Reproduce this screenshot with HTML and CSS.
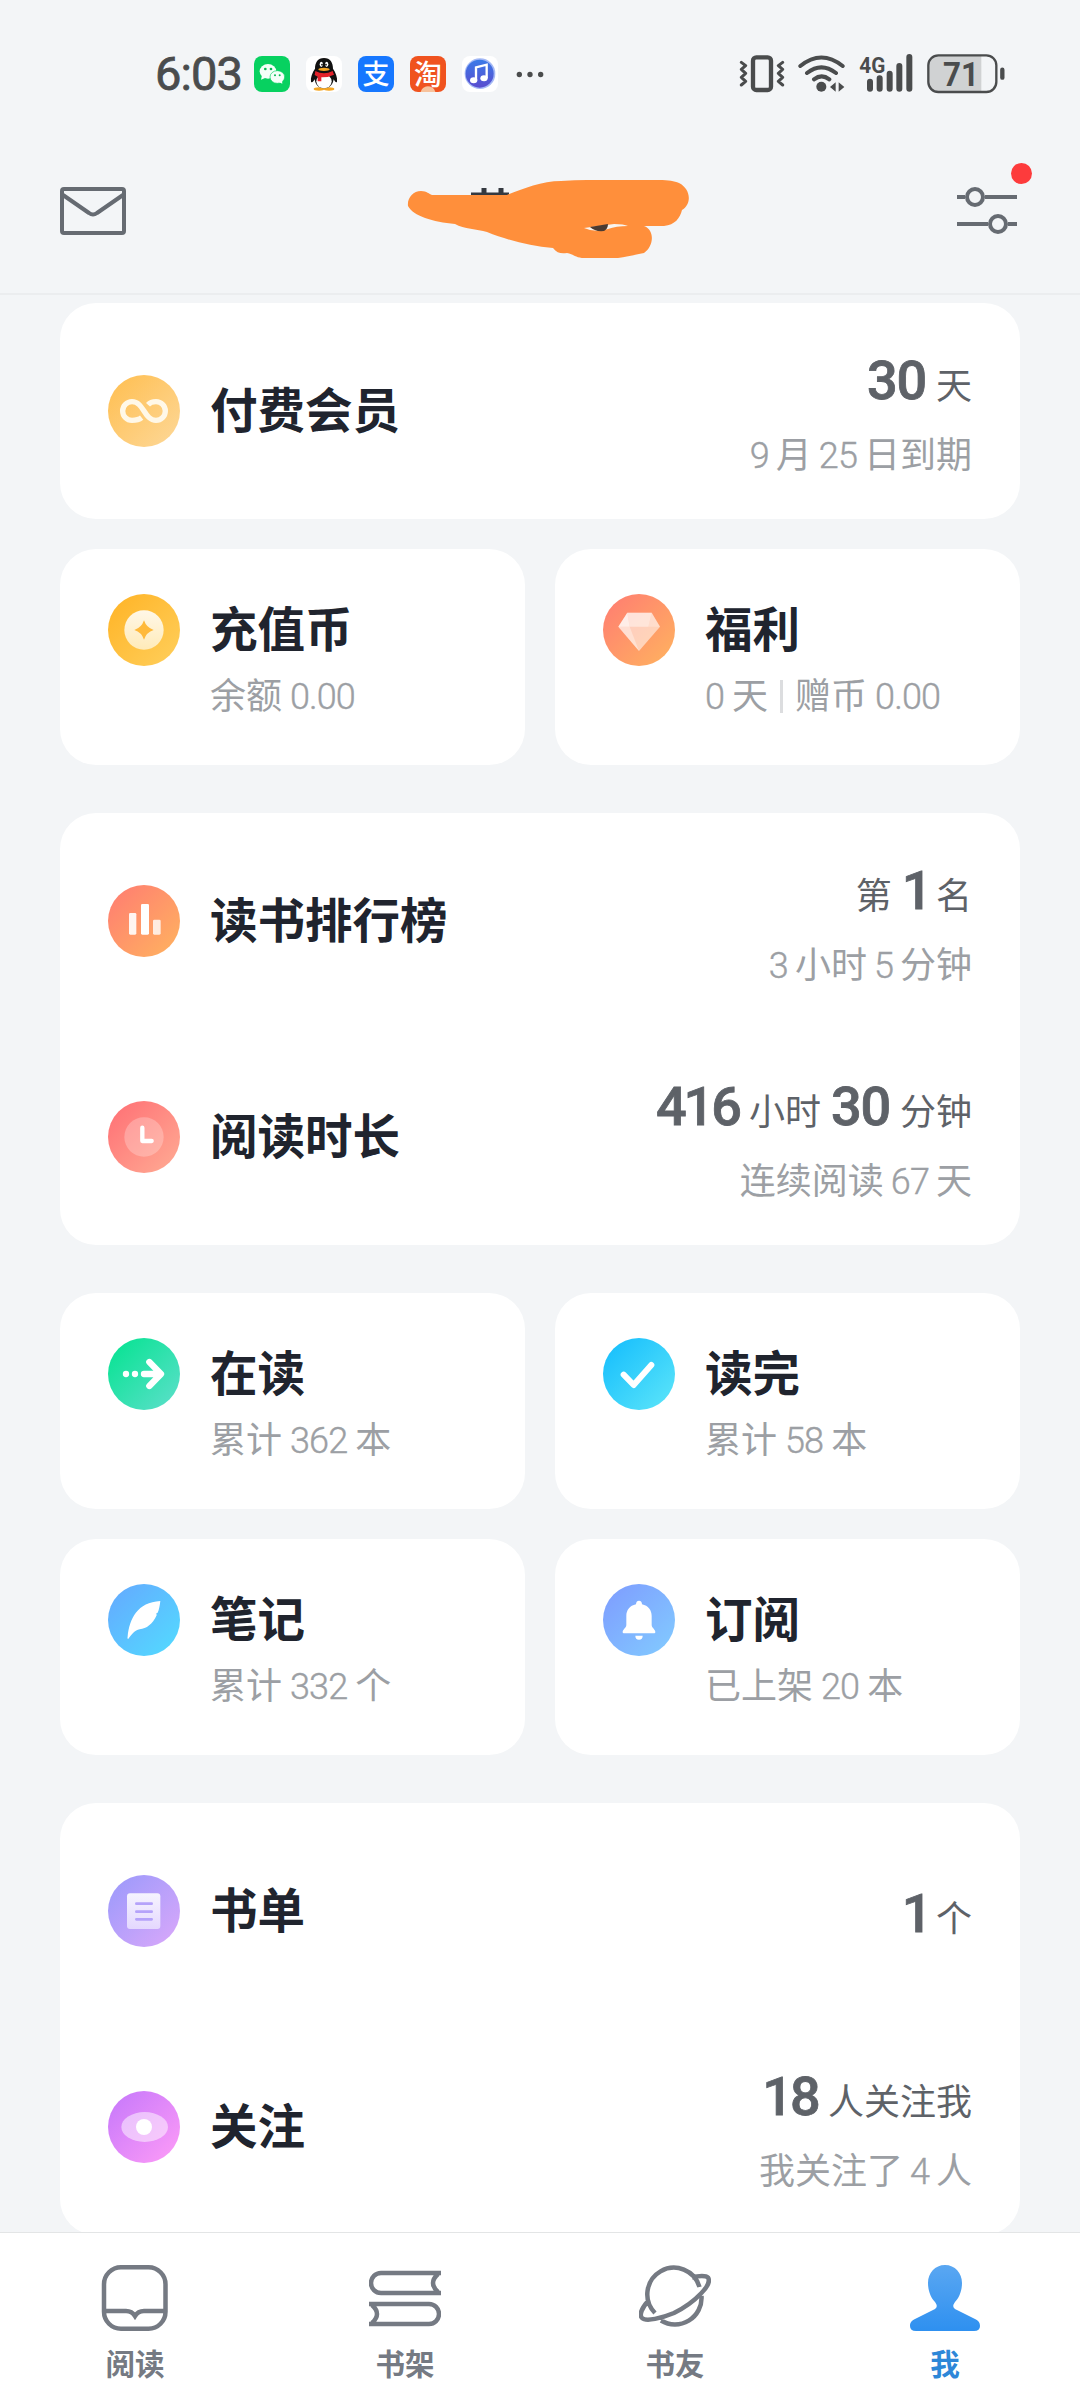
FILE: index.html
```html
<!DOCTYPE html>
<html lang="zh-CN">
<head>
<meta charset="utf-8">
<title>我</title>
<link rel="stylesheet" href="styles.css">
</head>
<body>
<div class="screen">
  <div class="status">
    <span class="time">6:03</span>
    <div class="apps">
      <svg viewBox="0 0 108 108"><rect width="108" height="108" rx="24" fill="#07d160"/><ellipse cx="42" cy="46" rx="25" ry="22" fill="#f4fff8"/><path d="M24 58l-3 13 14-6z" fill="#f4fff8"/><ellipse cx="70" cy="63" rx="22" ry="19" fill="#f4fff8" stroke="#07d160" stroke-width="2"/><path d="M74 78l11 5-1-9z" fill="#f4fff8"/><g fill="#07b953"><circle cx="34" cy="39" r="4"/><circle cx="51" cy="39" r="4"/><circle cx="63" cy="58" r="3"/><circle cx="77" cy="58" r="3"/></g></svg>
      <svg viewBox="0 0 108 108"><rect width="108" height="108" rx="24" fill="#fff"/><ellipse cx="39" cy="99" rx="16" ry="5" fill="#f5a623"/><ellipse cx="69" cy="99" rx="16" ry="5" fill="#f5a623"/><path d="M54 6c-19 0-27 14-27 32-8 12-14 26-12 39 3 5 8-1 11-7 2 14 10 27 28 27s27-13 29-27c3 6 8 12 10 7 2-13-4-27-12-39C81 20 73 6 54 6z" fill="#111"/><ellipse cx="54" cy="76" rx="23" ry="21" fill="#fff"/><path d="M28 45q26 14 52 0l4 11q-19 9-38 8v12H35V62l-9-5z" fill="#e3222b"/><ellipse cx="46" cy="25" rx="5" ry="8" fill="#fff"/><ellipse cx="62" cy="25" rx="5" ry="8" fill="#fff"/><circle cx="48" cy="26" r="2.5"/><circle cx="60" cy="26" r="2.5"/><ellipse cx="54" cy="40" rx="17" ry="5" fill="#f5a623"/></svg>
      <span class="app alipay">支</span>
      <span class="app taobao">淘</span>
      <svg viewBox="0 0 108 108"><defs><linearGradient id="mu" x2="0" y2="1"><stop stop-color="#3b7be8"/><stop offset="1" stop-color="#5a4ccf"/></linearGradient></defs><rect width="108" height="108" rx="24" fill="#fff"/><circle cx="54" cy="53" r="46" fill="#a5b9f5"/><circle cx="53" cy="53" r="42" fill="url(#mu)"/><path d="M42 72V34l32-8v40" fill="none" stroke="#fff" stroke-width="7"/><ellipse cx="35" cy="73" rx="11" ry="9" fill="#fff"/><ellipse cx="66" cy="67" rx="11" ry="9" fill="#fff"/></svg>
    </div>
    <svg class="more" viewBox="0 0 84 20" fill="#4a4c4d"><circle cx="10" cy="10" r="8"/><circle cx="42" cy="10" r="8"/><circle cx="74" cy="10" r="8"/></svg>
    <svg class="system" viewBox="0 0 810 120" fill="none" stroke="#4a4c4d">
      <rect x="42" y="10" width="54" height="98" rx="10" stroke-width="13"/>
      <path d="M7 25l13 10-13 11 13 12-13 12 13 12-13 11M131 25l-13 10 13 11-13 12 13 12-13 12 13 11" stroke-width="9" stroke-linejoin="round" stroke-linecap="round"/>
      <path d="M184 36q63-51 127 0M204 57q43-34 87 0M225 76q23-18 46 0" stroke-width="12" stroke-linecap="round"/>
      <g fill="#4a4c4d" stroke="none"><circle cx="247" cy="98" r="15"/><path d="M273 99l17-14v28zM316 99l-17-14v28z"/></g>
      <path d="M393 83v21M422 73v31M452 59v45M481 36v68M511 9v95" stroke-width="18" stroke-linecap="round"/>
      <text class="net" x="361" y="57" textLength="78" lengthAdjust="spacingAndGlyphs">4G</text>
      <path d="M596 6h131v106H596q-26 0-26-28V34q0-28 26-28z" fill="#d0d2d3" stroke="none"/>
      <rect x="568" y="4" width="204" height="110" rx="30" stroke-width="7"/>
      <path d="M790 47v24" stroke-width="13" stroke-linecap="round"/>
      <text class="level" x="612" y="95" textLength="108" lengthAdjust="spacingAndGlyphs">71</text>
    </svg>
  </div>

  <header class="topbar">
    <svg class="mail" viewBox="0 0 66 48" fill="none" stroke="#666b72" stroke-width="4" stroke-linejoin="round"><rect x="2" y="2" width="62" height="44" rx="2"/><path d="M3 8l26 18q4 3 8 0L63 8"/></svg>
    <svg class="scribble" viewBox="0 0 284 82"><path d="M65 16h38M78 9v7M95 9v7" stroke="#343940" stroke-width="5"/><path d="M2 27C1 19 7 12 15 12c6 0 8 3 11 4h75C116 10 136 2 155 2q14-1 26-1h72c10 0 15 1 20 3 12 6 13 21 3 27-2 8-7 15-18 16l-20 0c11 4 10 20 0 27-10 2-18 4-26 5h-34c-8 0-11-4-17-5-6 1-10 0-14-5-23-2-46-8-66-16-10-3-23-3-32-8C27 43 7 37 2 27z" fill="#ff8f3b"/><path d="M178 49q15-2 30-4 10 0 14 2-12 0-20 3-13 4-24-1z" fill="#f8f4ef"/><path d="M184 48l18-3q0 5-4 7-9 1-14-4z" fill="#4a3b32"/></svg>
    <div class="settings">
      <svg viewBox="0 0 60 48" fill="none" stroke="#666b72" stroke-width="4"><path d="M0 10h8M28 10h32M0 37h31M51 37h9"/><circle cx="18" cy="10" r="8"/><circle cx="41" cy="37" r="8"/></svg>
      <i class="dot"></i>
    </div>
  </header>

  <main class="content">
    <section class="card">
      <div class="row">
        <svg class="ico" viewBox="0 0 216 216"><defs><linearGradient id="g1" x2="1" y2="1"><stop stop-color="#ffbe4f"/><stop offset="1" stop-color="#fdd899"/></linearGradient></defs><circle cx="108" cy="108" r="108" fill="url(#g1)"/><path d="M101 128Q91 136 72 136a28 28 0 0 1 0-56c36 0 36 56 72 56a28 28 0 0 0 0-56q-16 0-24 9" fill="none" stroke="#fff8e8" stroke-width="16"/></svg>
        <h2>付费会员</h2>
        <div class="info"><p class="main"><b>30</b>天</p><p class="sub"><s class="first">9</s>月<s>25</s>日到期</p></div>
      </div>
    </section>
    <div class="grid">
      <section class="card tile">
        <svg class="ico" viewBox="0 0 216 216"><defs><linearGradient id="g2" x2="1" y2="1"><stop stop-color="#ffb325"/><stop offset="1" stop-color="#ffcf5c"/></linearGradient><linearGradient id="g2b" x2="0" y2="1"><stop stop-color="#fff"/><stop offset="1" stop-color="#fff0c8"/></linearGradient></defs><circle cx="108" cy="108" r="108" fill="url(#g2)"/><circle cx="108" cy="108" r="59" fill="url(#g2b)" opacity=".88"/><path d="M108 79q7 22 29 29-22 7-29 29-7-22-29-29 22-7 29-29z" fill="#ffb93a"/></svg>
        <div class="text"><h2>充值币</h2><p class="sub">余额<s>0.00</s></p></div>
      </section>
      <section class="card tile">
        <svg class="ico" viewBox="0 0 216 216"><defs><linearGradient id="g3" x2="1" y2="1"><stop stop-color="#ff7b72"/><stop offset="1" stop-color="#ffb45f"/></linearGradient></defs><circle cx="108" cy="108" r="108" fill="url(#g3)"/><g fill="#fff"><path d="M73 56h73l25 42-63 73L46 98z" opacity=".55"/><path d="M73 56l-27 42h34z" opacity=".65"/><path d="M73 56h73l-10 42H80z" opacity=".45"/><path d="M46 98h34l28 73z" opacity=".35"/><path d="M136 98h35l-25-42z" opacity=".25"/></g></svg>
        <div class="text"><h2>福利</h2><p class="sub"><s class="first">0</s>天<i class="bar"></i>赠币<s>0.00</s></p></div>
      </section>
    </div>

    <section class="card group">
      <div class="row">
        <svg class="ico" viewBox="0 0 216 216"><circle cx="108" cy="108" r="108" fill="url(#g3)"/><g fill="#fff"><rect x="63" y="84" width="22" height="65" rx="4" opacity=".9"/><rect x="99" y="57" width="24" height="92" rx="4"/><rect x="135" y="104" width="23" height="45" rx="4" opacity=".8"/></g></svg>
        <h2>读书排行榜</h2>
        <div class="info"><p class="main">第<b class="one">1</b>名</p><p class="sub"><s class="first">3</s>小时<s>5</s>分钟</p></div>
      </div>
      <div class="row">
        <svg class="ico" viewBox="0 0 216 216"><defs><linearGradient id="g4" x2="1" y2="1"><stop stop-color="#ff6e74"/><stop offset="1" stop-color="#ffac94"/></linearGradient></defs><circle cx="108" cy="108" r="108" fill="url(#g4)"/><circle cx="108" cy="108" r="59" fill="#fff" opacity=".25"/><path d="M103 80v40h28" fill="none" stroke="#fff" stroke-width="13" stroke-linecap="round" stroke-linejoin="round"/></svg>
        <h2>阅读时长</h2>
        <div class="info"><p class="main"><b class="mid">416</b>小时<b>30</b>分钟</p><p class="sub">连续阅读<s>67</s>天</p></div>
      </div>
    </section>

    <div class="grid group">
      <section class="card tile">
        <svg class="ico" viewBox="0 0 216 216"><defs><linearGradient id="g5" x2="1" y2="1"><stop offset=".1" stop-color="#0be395"/><stop offset="1" stop-color="#5fdfcc"/></linearGradient></defs><circle cx="108" cy="108" r="108" fill="url(#g5)"/><g fill="#fff"><circle cx="54" cy="108" r="9.500"/><circle cx="81" cy="108" r="9.500"/></g><path d="M108 108h50M124 72l35 36-35 36" fill="none" stroke="#fff" stroke-width="19" stroke-linecap="round" stroke-linejoin="round"/></svg>
        <div class="text"><h2>在读</h2><p class="sub">累计<s>362</s>本</p></div>
      </section>
      <section class="card tile">
        <svg class="ico" viewBox="0 0 216 216"><defs><linearGradient id="g6" x2="1" y2="1"><stop stop-color="#12bcfd"/><stop offset="1" stop-color="#5ee6f9"/></linearGradient></defs><circle cx="108" cy="108" r="108" fill="url(#g6)"/><path d="M62 110l30 31 53-60" fill="none" stroke="#fff" stroke-width="18" stroke-linecap="round" stroke-linejoin="round"/></svg>
        <div class="text"><h2>读完</h2><p class="sub">累计<s>58</s>本</p></div>
      </section>
      <section class="card tile">
        <svg class="ico" viewBox="0 0 216 216"><defs><linearGradient id="g7" x2="1" y2="1"><stop stop-color="#65a8ff"/><stop offset="1" stop-color="#52dcff"/></linearGradient></defs><circle cx="108" cy="108" r="108" fill="url(#g7)"/><path d="M157 51c-2 16-4 27-8 35l-4 2 1 6c-13 27-30 40-51 42-15 2-24 16-35 30q-3-1-1-9C65 104 88 55 157 51z" fill="#fff"/></svg>
        <div class="text"><h2>笔记</h2><p class="sub">累计<s>332</s>个</p></div>
      </section>
      <section class="card tile">
        <svg class="ico" viewBox="0 0 216 216"><defs><linearGradient id="g8" x2="1" y2="1"><stop stop-color="#7e9bff"/><stop offset="1" stop-color="#82ccff"/></linearGradient></defs><circle cx="108" cy="108" r="108" fill="url(#g8)"/><path d="M108 50c6 0 9 5 9 11 19 4 29 18 29 35v27c0 9 11 13 11 21 0 3-2 4-4 4H63c-2 0-4-1-4-4 0-8 11-12 11-21V96c0-17 10-31 29-35 0-6 3-11 9-11zM97 155h22q0 12-11 12t-11-12z" fill="#fff"/></svg>
        <div class="text"><h2>订阅</h2><p class="sub">已上架<s>20</s>本</p></div>
      </section>
    </div>

    <section class="card group">
      <div class="row">
        <svg class="ico" viewBox="0 0 216 216"><defs><linearGradient id="g9" x2="1" y2="1"><stop stop-color="#9999fb"/><stop offset="1" stop-color="#dba8fa"/></linearGradient><linearGradient id="g9b" x2="0" y2="1"><stop stop-color="#fff"/><stop offset="1" stop-color="#e9dfff"/></linearGradient></defs><circle cx="108" cy="108" r="108" fill="url(#g9)"/><rect x="57" y="55" width="100" height="107" rx="9" fill="url(#g9b)" opacity=".88"/><path d="M85 86h46M85 110h46M85 133h46" stroke="#b5a2fa" stroke-width="8" stroke-linecap="round"/></svg>
        <h2>书单</h2>
        <div class="info single"><p class="main"><b class="one">1</b>个</p></div>
      </div>
      <div class="row">
        <svg class="ico" viewBox="0 0 216 216"><defs><linearGradient id="g10" x2="1" y2="1"><stop stop-color="#c477fb"/><stop offset="1" stop-color="#ff9cf7"/></linearGradient></defs><circle cx="108" cy="108" r="108" fill="url(#g10)"/><ellipse cx="110" cy="108" rx="70" ry="45" fill="#fff" opacity=".5"/><circle cx="108" cy="108" r="24" fill="#fff"/></svg>
        <h2>关注</h2>
        <div class="info"><p class="main"><b class="mid18">18</b>人关注我</p><p class="sub">我关注了<s>4</s>人</p></div>
      </div>
    </section>
  </main>

  <nav class="tabs">
    <a class="tab"><svg viewBox="0 0 72 66" fill="none" stroke="#757a83" stroke-width="4.5"><rect x="5" y="2.250" width="61.500" height="61.500" rx="17"/><path d="M5 46h22q6 0 9 5 3-5 9-5h22"/></svg><span>阅读</span></a>
    <a class="tab"><svg viewBox="0 0 72 66" fill="none" stroke="#757a83" stroke-width="4.5"><path d="M72 8H12a10 10 0 0 0 0 20h60M69 9q-10 9 0 18M0 39h60a10 10 0 0 1 0 20H0M3 40q10 9 0 18"/></svg><span>书架</span></a>
    <a class="tab"><svg viewBox="0 0 72 66" fill="none" stroke="#757a83" stroke-width="4.5"><path d="M60.500 22A26.600 26.600 0 1 0 16 48M22 55.500A26.600 26.600 0 0 0 62.500 31M53 12.500c7-2 14-2 16 0 2 3 0 9-7 16C54 37 43 44 35 48 23 53 7 57 3 53c-3-3 0-10 6-17"/></svg><span>书友</span></a>
    <a class="tab active"><svg viewBox="0 0 72 66"><defs><linearGradient id="me" x2="0" y2="1"><stop stop-color="#5aa7f2"/><stop offset="1" stop-color="#2e90f0"/></linearGradient></defs><path d="M36 0c10 0 17 8 17 18 0 8-3 15-7 19-3 4-2 6 2 8l18 9c4 2 5 4 5 7q0 5-6 5H7q-6 0-6-5c0-3 1-5 5-7l18-9c4-2 5-4 2-8-4-4-7-11-7-19C19 8 26 0 36 0z" fill="url(#me)"/></svg><span>我</span></a>
  </nav>
</div>
</body>
</html>
```
FILE: styles.css
```css
* { box-sizing: border-box; margin: 0; padding: 0; }
body {
  background: #f3f5f7;
  font-family: "Noto Sans CJK SC", "Noto Sans", sans-serif;
  color: #20242e;
}
svg { display: block; flex: none; }
.screen { width: 1080px; height: 2400px; display: flex; flex-direction: column; overflow: hidden; }

/* status bar */
.status { height: 146px; flex: none; display: flex; align-items: center; padding: 2px 77px 0 155px; }
.time { font: 400 47px/56px Roboto, sans-serif; letter-spacing: -.9px; color: #4a4c4d; width: 99px; -webkit-text-stroke: .8px #4a4c4d; }
.apps { display: flex; gap: 16px; }
.apps > * { width: 36px; height: 36px; }
.app { border-radius: 8px; color: #fff; text-align: center; font-weight: 500; font-size: 27px; line-height: 34px; }
.alipay { background: #1677ff; }
.taobao { background: #f0531f; font-size: 28px; background-image: radial-gradient(circle at 50% 105%, #f7c29c 0 7px, transparent 8px); }
.more { width: 28px; height: 7px; margin-left: 18px; }
.system { width: 270px; height: 40px; margin-left: auto; margin-right: -6px; }
.net { font: 700 66px Roboto, sans-serif; fill: #4a4c4d; stroke: none; }
.level { font: 700 98px Roboto, sans-serif; fill: #4a4c4d; stroke: none; }

/* header */
.topbar { height: 149px; flex: none; display: flex; align-items: center; justify-content: space-between; padding: 0 63px 17px 60px; border-bottom: 2px solid #ebedef; }
.mail { width: 66px; height: 48px; }
.scribble { width: 284px; height: 82px; margin: 18px 0 0 12px; }
.settings { position: relative; width: 60px; height: 48px; }
.dot { position: absolute; left: 54px; top: -24px; width: 21px; height: 21px; border-radius: 50%; background: #fd3b3c; }

/* cards */
.content { flex: 1; min-height: 0; overflow: hidden; padding: 8px 60px 0; display: flex; flex-direction: column; gap: 30px; }
.card { background: #fff; border-radius: 36px; flex: none; }
.group { margin-top: 18px; }
.grid { display: grid; grid-template-columns: 1fr 1fr; gap: 30px; flex: none; }
.row { height: 216px; display: flex; align-items: center; padding: 0 48px; }
.tile { height: 216px; display: flex; padding: 45px 48px 0; }
.ico { width: 72px; height: 72px; margin-right: 30px; }
h2 { font-size: 47.500px; line-height: 72px; font-weight: 700; position: relative; top: -3px; }
.info { margin: 14px 0 0 auto; text-align: right; }
.single { margin-top: 10px; }
.main, .sub { font-size: 36px; line-height: 69px; white-space: nowrap; }
.main { color: #5e6268; }
.sub { color: #9c9fa4; }
.main b { font: 500 54px/0 Roboto, sans-serif; letter-spacing: -1.200px; margin: 0 10px; -webkit-text-stroke: .8px #5e6268; }
.main .one { letter-spacing: -6.500px; }
.main .mid { letter-spacing: -3px; }
.main .mid18 { letter-spacing: -2.800px; }
.sub s { font: 300 36px/0 Roboto, sans-serif; letter-spacing: -.9px; margin: 0 8px; text-decoration: none; -webkit-text-stroke: .4px #9c9fa4; }
.info .sub s { margin: 0 7px; }
.sub .first, .info .sub .first { margin-left: 0; }
.bar { display: inline-block; width: 3px; height: 33px; margin: 0 12px; background: #dcdddf; vertical-align: -4px; }
.tile .sub { line-height: 54px; }

/* bottom tabs */
.tabs { height: 168px; flex: none; background: #fff; border-top: 1px solid #e3e5e6; display: grid; grid-template-columns: repeat(4, 1fr); }
.tab { display: flex; flex-direction: column; align-items: center; padding-top: 32px; color: #757a83; }
.tab svg { width: 72px; height: 66px; }
.tab span { font-size: 29.500px; line-height: 40px; font-weight: 700; margin-top: 11px; }
.active { color: #2d87d8; }
```
